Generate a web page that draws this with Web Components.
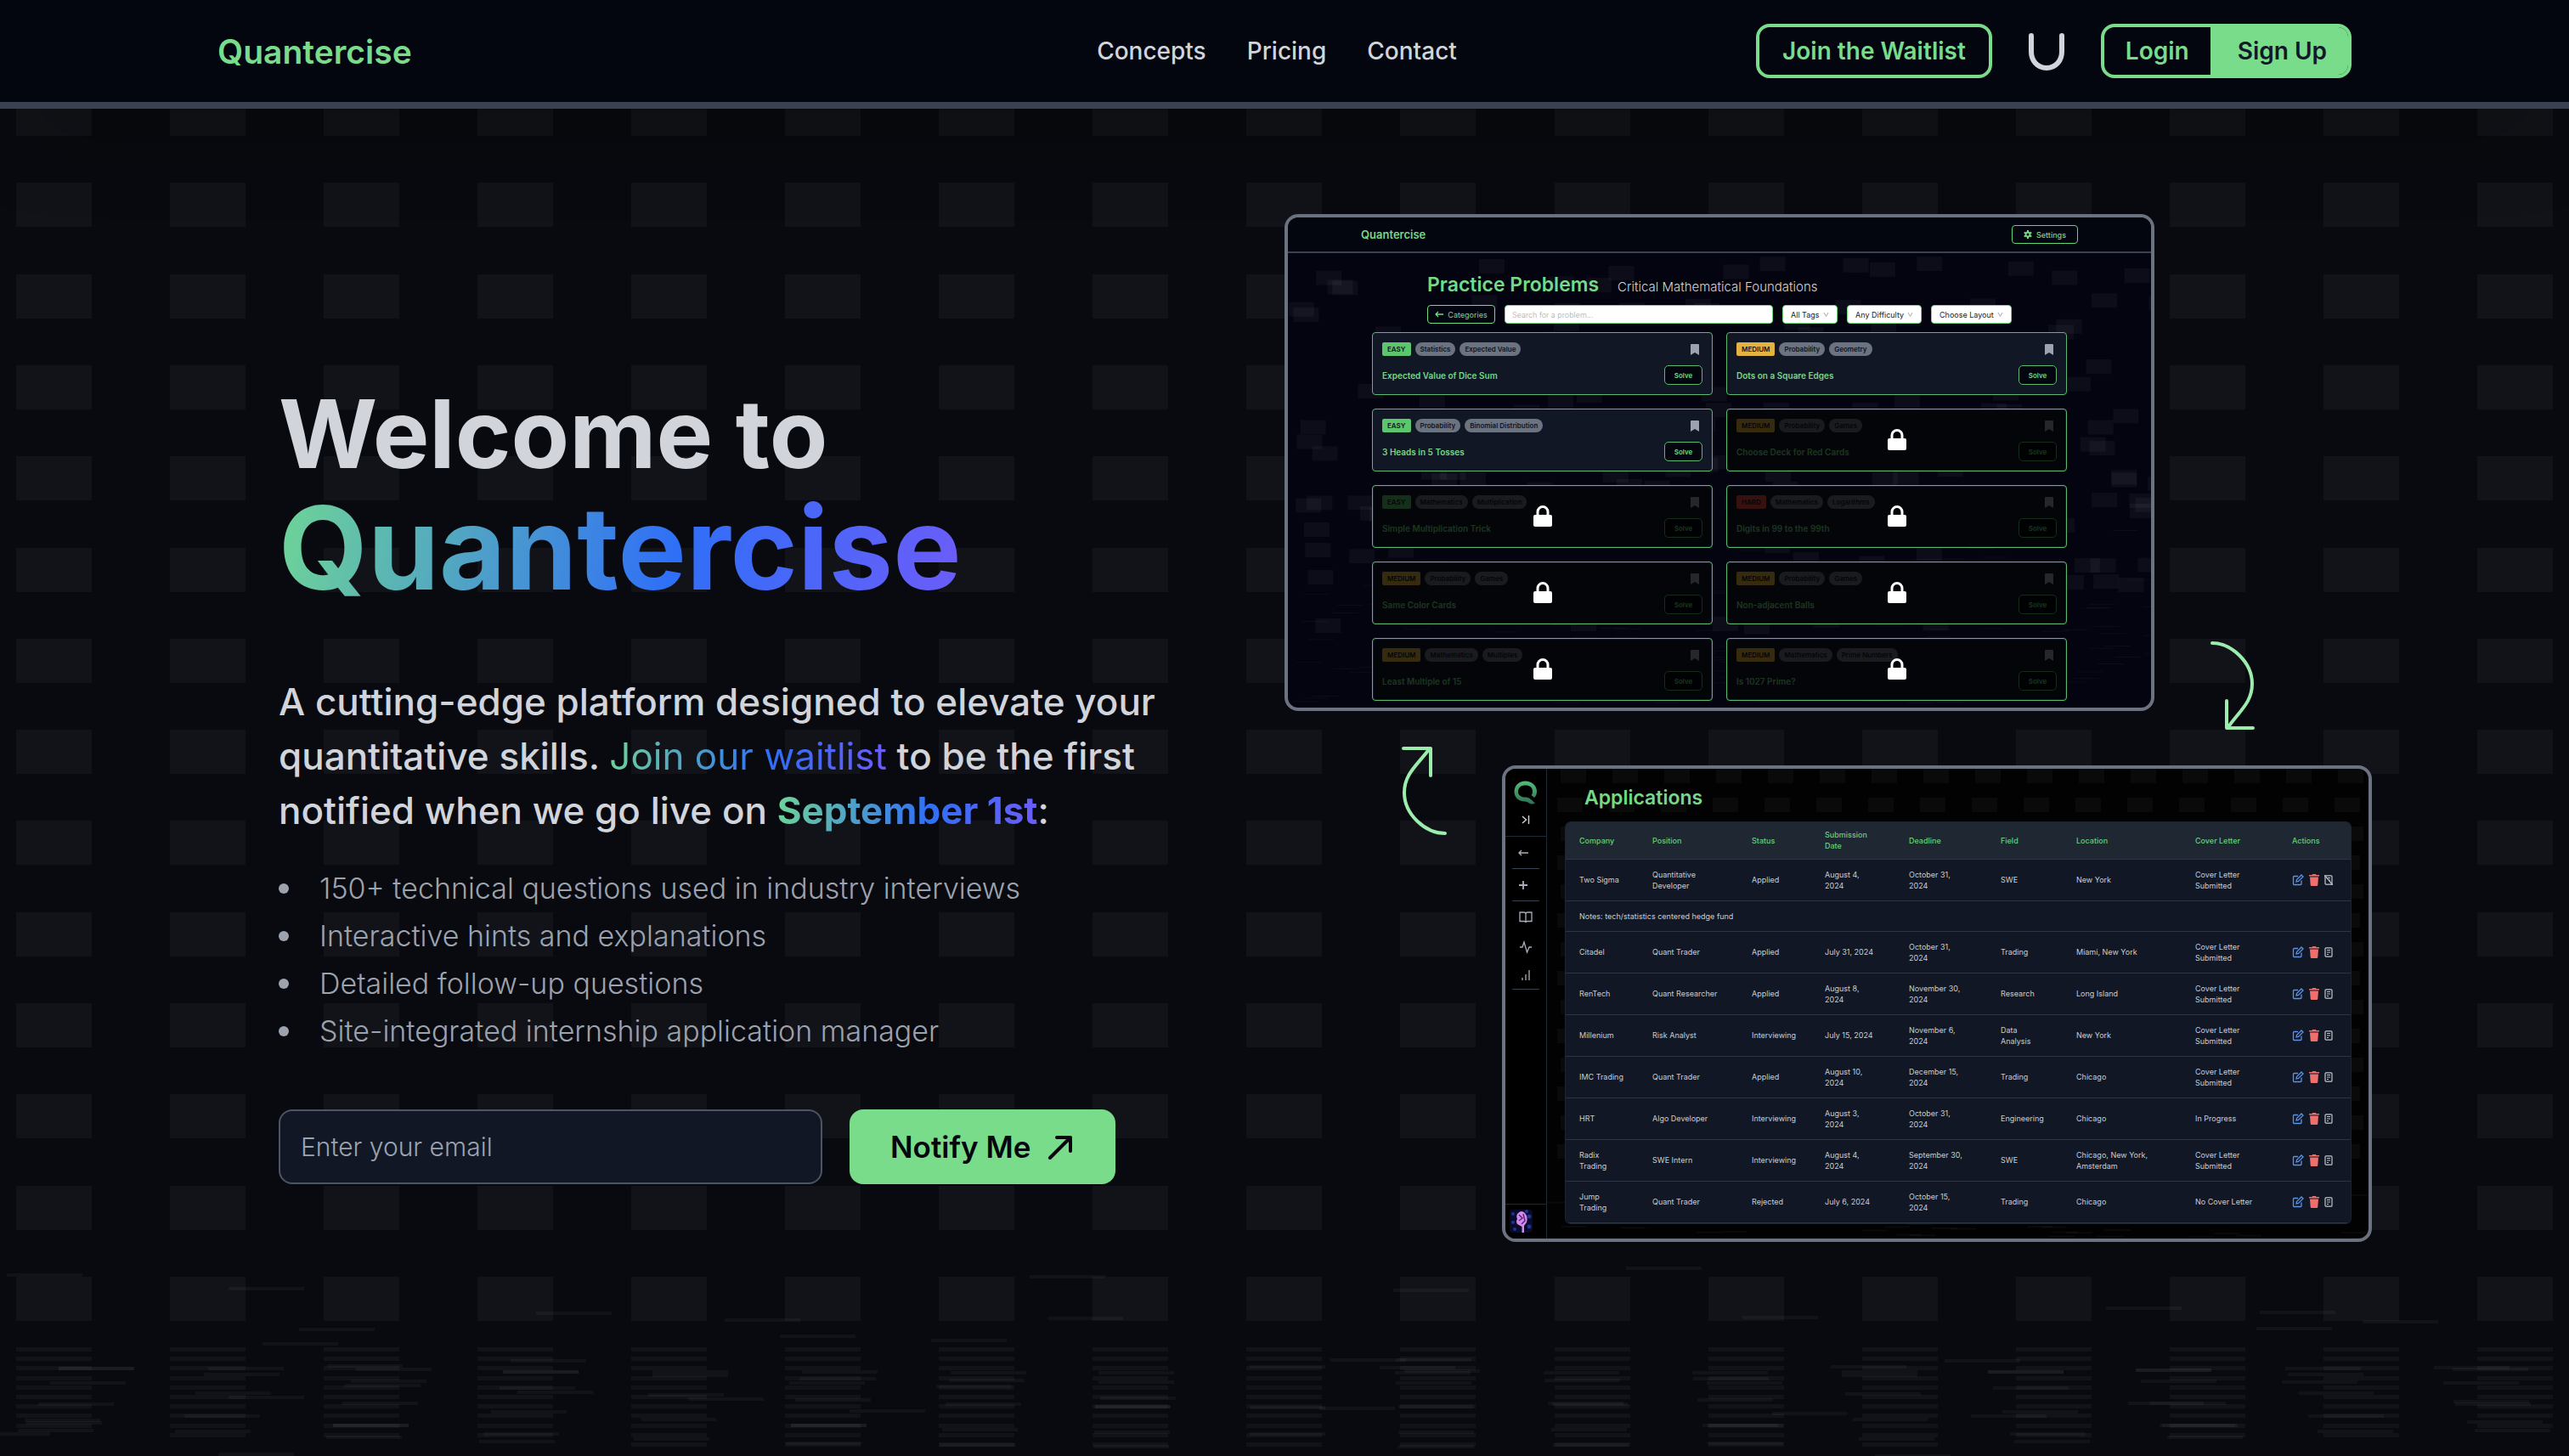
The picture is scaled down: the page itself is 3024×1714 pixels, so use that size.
<!DOCTYPE html>
<html lang="en">
<head>
<meta charset="utf-8">
<title>Quantercise</title>
<style>
  :root {
    --green: #79dc8a;
    --ink: #d1d5db;
    --grad: linear-gradient(100deg, #6fd596, #2f6ff7 58%, #6d5cfa);
  }
  body {
    margin: 0;
    background: #090a0f;
    color: var(--ink);
    font-family: Inter, "Noto Sans", sans-serif;
  }
</style>
</head>
<body>
<q-page></q-page>

<script>
const make = (name, html, setup) => {
  const tpl = document.createElement('template');
  tpl.innerHTML = `<style>*{box-sizing:border-box}a{color:inherit;text-decoration:none}button,input,select{font:inherit;color:inherit;margin:0}svg{display:block}</style>` + html;
  customElements.define(name, class extends HTMLElement {
    constructor() {
      super();
      this.attachShadow({ mode: 'open' }).append(tpl.content.cloneNode(true));
    }
    connectedCallback() {
      if (setup && !this.ready) { this.ready = true; setup(this, this.shadowRoot); }
    }
  });
};

const seeded = seed => () => (seed = (seed * 16807) % 2147483647) / 2147483647;

/* Falling tile backdrop of the whole page */
make('tile-field', `
<style>:host{display:block;position:absolute;inset:0;z-index:-1;overflow:hidden}svg{width:100%;height:100%}</style>
<svg viewBox="0 0 3024 1714" preserveAspectRatio="xMinYMin slice" fill="#fff" fill-opacity=".038"></svg>`,
(el, root) => {
  let s = '';
  const cols = Array.from({ length: 17 }, (_, i) => Math.round(19 + i * 181.05));
  const arc = [8, 9, 9, 9, 10, 10, 10, 10, 10, 10, 10, 10, 10, 9, 9, 9, 8];
  cols.forEach((x, c) => {
    for (let r = 0; r < 14; r++) s += `<rect x="${x}" y="${Math.round(108 + r * 107.3)}" width="89" height="52"/>`;
    for (let r = 0; r <= arc[c]; r++) s += `<rect x="${x}" y="${Math.round(1586 + r * 11.2)}" width="89" height="5"/>`;
  });
  const left = [[8,177],[281,225],[659,312],[891,337],[1267,183],[1289,329],[368,370],[323,419],[959,394],[1145,408],[402,498],[438,511],[628,480],[619,520],[619,520],[72,506],[72,506],[256,507],[251,528],[62,557],[432,552],[424,567],[614,576],[636,591],[240,595],[281,609],[47,633],[421,630],[604,661],[227,675],[30,691],[32,698],[22,726],[-31,739],[215,730],[410,709],[410,709],[595,737],[401,751],[589,765],[269,810],[803,520],[803,531],[986,520],[984,542],[971,557],[797,599],[846,615],[978,619],[1045,658],[788,688],[973,709],[973,709],[780,756],[967,772],[1169,521],[1167,550],[1152,570],[1163,633],[1159,723],[1156,778],[1351,521],[1351,556],[1353,611],[1347,643],[1347,643],[1346,732],[1345,784]];
  const right = [[426,153],[144,232],[567,326],[1007,293],[1194,310],[1318,341],[1190,367],[68,477],[147,477],[128,503],[146,521],[157,517],[147,557],[326,521],[327,550],[506,521],[507,542],[524,557],[674,501],[687,520],[687,531],[812,480],[864,519],[864,519],[871,576],[1043,512],[1043,514],[1050,552],[1224,507],[1228,528],[1220,554],[1240,595],[1405,505],[1427,509],[1416,557],[692,598],[512,618],[336,633],[331,631],[-30,500],[-30,644],[55,647],[150,643],[150,731],[603,665],[882,661],[844,675],[701,688],[519,709],[525,709],[335,723],[338,778],[525,772],[708,756],[891,738],[896,765],[1034,631],[1061,631],[1072,709],[1075,709],[1081,751],[1252,675],[1264,730],[1428,625],[1430,632],[1445,697],[1454,726],[728,816],[150,782],[-30,738]];
  const put = (list, ox, sx) => list.forEach(([x, y]) => {
    s += `<rect x="${Math.round(ox + x / sx)}" y="${Math.round(1440 + y / 3)}" width="89" height="4"/>`;
  });
  put(left, 0, 1.045);
  put(right, 1500, 1.029);
  root.querySelector('svg').innerHTML = s;
});

/* Tile backdrops inside the two product previews */
make('mini-tiles', `
<style>:host{display:block;position:absolute;inset:0;overflow:hidden}svg{width:100%;height:100%}</style>
<svg viewBox="0 0 1016 575" preserveAspectRatio="xMinYMin slice" fill="#fff"></svg>`,
(el, root) => {
  const rnd = seeded(+el.getAttribute('seed'));
  let s = '';
  if (el.getAttribute('kind') === 'grid') {
    for (let c = 0; c < 17; c++) {
      for (let r = 0; r < 14; r++) s += `<rect x="${65 + c * 61 - (r % 2) * 4}" y="${r * 34}" width="30" height="17"/>`;
    }
    for (let i = 0; i < 70; i++) s += `<rect x="${40 + rnd() * 960}" y="${500 + rnd() * 52}" width="30" height="2"/>`;
  } else {
    for (let i = 0; i < 170; i++) s += `<rect x="${rnd() * 1010}" y="${44 + rnd() * 430}" width="30" height="17"/>`;
    for (let i = 0; i < 150; i++) s += `<rect x="${rnd() * 1010}" y="${340 + Math.sqrt(rnd()) * 230}" width="30" height="1"/>`;
  }
  const svg = root.querySelector('svg');
  svg.setAttribute('fill-opacity', el.getAttribute('alpha'));
  svg.innerHTML = s;
});

make('site-header', `
<style>
  :host{display:block;position:relative;z-index:1}
  header{display:grid;grid-template-columns:1fr auto 1fr;align-items:center;height:128px;padding:0 256px;
    background:#03050f;border-bottom:8px solid #3a4150;box-shadow:0 50px 100px -24px rgba(0,0,0,.3)}
  .logo{font-size:39px;font-weight:600;color:var(--green);justify-self:start}
  nav{display:flex;gap:48px;margin-right:18px;font-size:28px;font-weight:500}
  .right{display:flex;align-items:center;justify-self:end;font-size:28px;font-weight:600;color:var(--green)}
  .box{display:flex;align-items:center;height:64px;border:4px solid var(--green);border-radius:16px;overflow:hidden}
  .wait{padding:0 27px}
  svg{margin:0 43px}
  .login{padding:0 25px}
  .sign{background:var(--green);color:#111827;padding:0 25px 0 32px;line-height:64px}
</style>
<header>
  <a class="logo" href="#">Quantercise</a>
  <nav><a href="#">Concepts</a><a href="#">Pricing</a><a href="#">Contact</a></nav>
  <div class="right">
    <a class="box wait" href="#">Join the Waitlist</a>
    <svg width="42" height="46" viewBox="0 0 42 46" fill="none" stroke="#d1d5db" stroke-width="6" stroke-linecap="round"><path d="M3 5V24C3 34 10 43 21 43S39 34 39 24V5"/></svg>
    <div class="box"><a class="login" href="#">Login</a><a class="sign" href="#">Sign Up</a></div>
  </div>
</header>`);

make('hero-copy', `
<style>
  :host{display:block}
  h1{margin:0 0 74px;font-size:112px;line-height:120px;font-weight:700}
  h1 span{display:block;font-size:135px;line-height:150px;width:fit-content}
  .g{background:var(--grad);-webkit-background-clip:text;background-clip:text;color:transparent}
  p{margin:0 0 32px;font-size:44px;line-height:64px;font-weight:500;max-width:1060px}
  p a{font-weight:400}
  p b{font-weight:700}
  ul{margin:0 0 64px;padding:0;list-style:none;font-size:34px;line-height:56px;font-weight:300;color:#9ca3af}
  li{display:flex;align-items:center;gap:36px}
  li::before{content:"";width:12px;height:12px;border-radius:50%;background:#9ca3af}
  form{display:flex;gap:32px}
  input{width:640px;height:88px;padding:0 24px;border:2px solid #4b5563;border-radius:16px;background:#111725;font-size:30px;font-weight:300;outline:0}
  input::placeholder{color:#9ca3af;opacity:1}
  button{display:flex;align-items:center;gap:20px;height:88px;padding:0 50px 0 48px;border:0;border-radius:16px;background:var(--green);
    color:#05070d;font-size:35px;font-weight:600}
</style>
<h1>Welcome to <span class="g">Quantercise</span></h1>
<p>A cutting-edge platform designed to elevate your<br>quantitative skills. <a class="g" href="#">Join our waitlist</a> to be the first<br>notified when we go live on <b class="g">September 1st</b>:</p>
<ul>
  <li>150+ technical questions used in industry interviews</li>
  <li>Interactive hints and explanations</li>
  <li>Detailed follow-up questions</li>
  <li>Site-integrated internship application manager</li>
</ul>
<form>
  <input type="email" placeholder="Enter your email" aria-label="Email">
  <button type="button">Notify Me <svg width="30" height="30" viewBox="0 0 30 30" fill="none" stroke="#05070d" stroke-width="4" stroke-linecap="round" stroke-linejoin="round"><path d="M3 28L27 4M11 4H27V20"/></svg></button>
</form>`);

make('app-window', `
<style>
  :host{display:block;width:1024px}
  div{position:relative;border:4px solid #6b7280;border-radius:16px;overflow:hidden;background:var(--bg,#03040f);height:100%;z-index:0}
</style>
<div><slot></slot></div>`);

make('problem-card', `
<style>
  :host{display:block;position:relative}
  article{height:74px;border:1px solid #5cb870;border-radius:4px;background:#111725;padding:11px;display:flex;flex-direction:column;justify-content:space-between;position:relative}
  .row{display:flex;align-items:center;justify-content:space-between}
  .tags{display:flex;gap:5px;font-size:8px;line-height:16px;font-weight:600;color:#10131c}
  .tags span{padding:0 6px;border-radius:8px;background:#6b7280}
  .tags .lv{border-radius:2px;background:#5cc66c}
  .tags .MEDIUM{background:#e3b341}
  .tags .HARD{background:#e0483e}
  h3{margin:0;font-size:10px;font-weight:600;color:#76d888}
  button{width:45px;height:23px;padding:0;border:1px solid #5cb870;border-radius:5px;background:#03050f;color:#76d888;font-size:8px;font-weight:600}
  .mark{margin-right:4px}
  .lock{display:none}
  :host([locked]) .lock{position:absolute;inset:1px;border-radius:3px;background:rgba(0,0,0,.76);display:flex;align-items:center;justify-content:center}
</style>
<article>
  <div class="row"><div class="tags"></div><svg class="mark" width="10" height="13" viewBox="0 0 10 13" fill="#9ca3af"><path d="M0 1Q0 0 1 0H9Q10 0 10 1V13L5 10L0 13Z"/></svg></div>
  <div class="row"><h3><slot></slot></h3><button type="button">Solve</button></div>
  <div class="lock"><svg width="22" height="26" viewBox="0 0 22 26"><rect y="11" width="22" height="14" rx="2" fill="#fff"/><path d="M5 12V7.500A6 6 0 0 1 17 7.500V12" fill="none" stroke="#fff" stroke-width="3"/></svg></div>
</article>`,
(el, root) => {
  const [lv, ...tags] = el.getAttribute('tags').split(',');
  root.querySelector('.tags').innerHTML = `<span class="lv ${lv}">${lv}</span>` + tags.map(t => `<span>${t}</span>`).join('');
});

make('practice-screen', `
<style>
  :host{display:block}
  header{position:relative;display:flex;align-items:center;justify-content:space-between;height:42px;padding:0 86px;background:#03050f;border-bottom:2px solid #3a4150}
  .logo{font-size:13px;font-weight:600;color:#76d888}
  .set{display:flex;align-items:center;gap:5px;width:78px;height:22px;justify-content:center;border:1px solid #5fd673;border-radius:4px;background:#03050f;color:#76d888;font-size:9px;font-weight:500;padding:0}
  .body{position:relative;padding:23px 99px 8px 99px}
  .title{display:flex;align-items:baseline;gap:22px;padding-left:65px;line-height:28px}
  h2{margin:0;font-size:23px;line-height:28px;font-weight:600;color:#76d888}
  .title span{font-size:15px;font-weight:300}
  .bar{display:flex;gap:11px;padding:7px 65px 10px;font-size:9px}
  .bar>*{height:22px;border:1px solid #6fdc80;border-radius:4px;background:#fff;color:#222;outline:0}
  .bar button{width:80px;padding:0;background:#03050f;color:#76d888;display:flex;align-items:center;justify-content:center;gap:5px}
  input{flex:1;min-width:0;padding:0 8px;font-weight:300}
  input::placeholder{color:#aaa;opacity:1}
  .pick{position:relative;display:flex}
  select{appearance:none;border:0;background:none;padding:0 9px;width:100%;outline:0}
  .pick svg{position:absolute;right:9px;top:7px}
  .w1{width:65px}.w2{width:88px}.w3{width:95px}
  .grid{display:grid;grid-template-columns:1fr 1fr;gap:16px}
</style>
<mini-tiles seed="77" kind="random" alpha=".04"></mini-tiles>
<header>
  <a class="logo" href="#">Quantercise</a>
  <button class="set" type="button"><svg width="10" height="10" viewBox="0 0 10 10"><circle cx="5" cy="5" r="2.500" fill="none" stroke="#76d888" stroke-width="2"/><path d="M5 0V2M5 8V10M.7 2.500L2.400 3.500M7.600 6.500L9.300 7.500M.7 7.500L2.400 6.500M7.600 3.500L9.300 2.500" stroke="#76d888" stroke-width="2"/></svg>Settings</button>
</header>
<div class="body">
  <div class="title"><h2>Practice Problems</h2><span>Critical Mathematical Foundations</span></div>
  <div class="bar">
    <button type="button"><svg width="10" height="8" viewBox="0 0 10 8" fill="none" stroke="#76d888" stroke-width="1.300"><path d="M10 4H1M4 1L1 4L4 7"/></svg>Categories</button>
    <input type="search" placeholder="Search for a problem..." aria-label="Search for a problem">
    <div class="pick w1"><select aria-label="Tags"><option>All Tags</option></select><svg width="7" height="7" viewBox="0 0 7 7" fill="none" stroke="#aaa"><path d="M1 1L3.500 5.500L6 1"/></svg></div>
    <div class="pick w2"><select aria-label="Difficulty"><option>Any Difficulty</option></select><svg width="7" height="7" viewBox="0 0 7 7" fill="none" stroke="#aaa"><path d="M1 1L3.500 5.500L6 1"/></svg></div>
    <div class="pick w3"><select aria-label="Layout"><option>Choose Layout</option></select><svg width="7" height="7" viewBox="0 0 7 7" fill="none" stroke="#aaa"><path d="M1 1L3.500 5.500L6 1"/></svg></div>
  </div>
  <div class="grid">
    <problem-card tags="EASY,Statistics,Expected Value">Expected Value of Dice Sum</problem-card>
    <problem-card tags="MEDIUM,Probability,Geometry">Dots on a Square Edges</problem-card>
    <problem-card tags="EASY,Probability,Binomial Distribution">3 Heads in 5 Tosses</problem-card>
    <problem-card locked tags="MEDIUM,Probability,Games">Choose Deck for Red Cards</problem-card>
    <problem-card locked tags="EASY,Mathematics,Multiplication">Simple Multiplication Trick</problem-card>
    <problem-card locked tags="HARD,Mathematics,Logarithms">Digits in 99 to the 99th</problem-card>
    <problem-card locked tags="MEDIUM,Probability,Games">Same Color Cards</problem-card>
    <problem-card locked tags="MEDIUM,Probability,Games">Non-adjacent Balls</problem-card>
    <problem-card locked tags="MEDIUM,Mathematics,Multiples">Least Multiple of 15</problem-card>
    <problem-card locked tags="MEDIUM,Mathematics,Prime Numbers">Is 1027 Prime?</problem-card>
  </div>
</div>`);

make('side-rail', `
<style>
  :host{display:flex;flex-direction:column;width:49px;border-right:1px solid #1f2937;background:#000;position:relative}
  .top{height:80px;border-bottom:1px solid #1f2937;display:flex;flex-direction:column;align-items:center;gap:12px;padding-top:14px}
  nav{display:flex;flex-direction:column;padding:0 8px}
  a{display:flex;align-items:center;justify-content:center;height:32px}
  a.sep{height:38px;border-bottom:1px solid #374151;padding-right:6px}
  nav .last{border-bottom:1px solid #374151;height:34px}
  nav .book{height:38px}
  .me{margin-top:auto;height:41px;border-top:1px solid #1f2937;padding:6px 5px}
  nav svg{stroke:#a9afb9;fill:none;stroke-width:1.300}
</style>
<div class="top">
  <svg width="28" height="28" viewBox="0 0 28 28" fill="none"><defs><linearGradient id="q" x1="0" y1="0" x2="0" y2="1"><stop stop-color="#56b978"/><stop offset="1" stop-color="#2d7353"/></linearGradient></defs><path d="M13.500 .5C21 .5 27 5.500 27 12.500C27 15.500 26 18 24 20L20.500 17C21.500 16 22 14.500 22 12.500C22 8 18.500 5.500 13.500 5.500C8.500 5.500 5 8 5 13C5 17 8.500 19.500 13 19.500C18 19.500 20 22 25 26.500L22 27.500C18 28 17 24.500 13 24.500C6 24.500 .5 20 .5 13C.5 5.500 6 .5 13.500 .5Z" fill="url(#q)"/></svg>
  <svg width="10" height="12" viewBox="0 0 10 12" fill="none" stroke="#d1d5db" stroke-width="1.400"><path d="M1 2L5.500 6L1 10M8.500 1V11"/></svg>
</div>
<nav>
  <a class="sep" href="#" aria-label="Back"><svg width="12" height="8" viewBox="0 0 12 8"><path d="M12 4H1.500M4 1L1 4L4 7"/></svg></a>
  <a class="sep" href="#" aria-label="Add"><svg width="10" height="10" viewBox="0 0 10 10" style="stroke-width:1.800"><path d="M5 0V10M0 5H10"/></svg></a>
  <a class="book" href="#" aria-label="Problems"><svg width="16" height="14" viewBox="0 0 16 14"><path d="M1 1H6Q8 1 8 3V13Q8 11.500 6 11.500H1ZM15 1H10Q8 1 8 3V13Q8 11.500 10 11.500H15Z"/></svg></a>
  <a href="#" aria-label="Activity"><svg width="16" height="16" viewBox="0 0 16 16"><path d="M1 8H4L6 2L9.500 14L12 8H15"/></svg></a>
  <a class="last" href="#" aria-label="Stats"><svg width="12" height="14" viewBox="0 0 12 14"><path d="M2 13V10M6 13V6M10 13V1"/></svg></a>
</nav>
<div class="me"><svg width="27" height="27" viewBox="0 0 27 27"><defs><clipPath id="r"><rect width="27" height="27" rx="4"/></clipPath></defs><g clip-path="url(#r)"><rect width="27" height="27" fill="#090a2c"/><g fill="#2543b5" opacity=".75"><circle cx="4" cy="5" r="2"/><circle cx="23" cy="8" r="2.500"/><circle cx="4" cy="15" r="2"/><circle cx="23" cy="20" r="2.500"/><circle cx="6" cy="23" r="2"/><circle cx="20" cy="2" r="2"/></g><path d="M10 4Q14 0 18 4Q22 9 20 15L17 19V27H14.500V20L9 17Q7 14 9 11Q7 7 10 4Z" fill="#d58be8"/><path d="M11 6L15 10L11 13M16 5L18 13L14 17" stroke="#5a2488" stroke-width="1.500" fill="none"/></g></svg></div>`);

make('row-actions', `
<style>
  :host{display:flex;align-items:center;gap:6px}
  button{padding:0;border:0;background:none}
</style>
<button type="button" aria-label="Edit"><svg width="14" height="14" viewBox="0 0 14 14" fill="none" stroke="#5b93e6" stroke-width="1.300"><path d="M7 2.500H2.500Q1.500 2.500 1.500 3.500V11.500Q1.500 12.500 2.500 12.500H10Q11 12.500 11 11.500V7.500M5 9L5.500 6.500L11 1L13 3L7.500 8.500Z"/></svg></button>
<button type="button" aria-label="Delete"><svg width="12" height="14" viewBox="0 0 12 14" fill="#ee6f6b"><path d="M4 0H8L8.500 1H12V2.500H0V1H3.500ZM1 3.500H11L10.300 12.800Q10.200 14 9 14H3Q1.800 14 1.700 12.800Z"/></svg></button>
<button type="button" aria-label="Notes"><svg width="10" height="12" viewBox="0 0 10 12" fill="none" stroke="#c3c7ce" stroke-width="1.200"><rect x="1" y=".8" width="8" height="10.400" rx="1"/><path class="n" d="M3 3.500H7M3 6H7M3 8.500H5"/></svg></button>`,
(el, root) => {
  if (el.hasAttribute('open')) root.querySelector('.n').setAttribute('d', 'M4 3.500H7M5 6H7M0 0L10 12');
});

make('applications-screen', `
<style>
  :host{display:flex;position:relative;height:553px}
  main{position:relative;flex:1;padding:23px 21px 0 22px}
  h2{margin:0 0 18px 22px;font-size:23px;line-height:22px;font-weight:600;color:#76d888}
  .wrap{border-radius:6px;overflow:hidden;background:#111725;box-shadow:0 0 0 1px #1c2432}
  table{width:100%;border-collapse:collapse;table-layout:fixed;font-size:9px;line-height:13px;color:#c9cdd3;white-space:nowrap}
  th{height:43px;background:#1f2733;color:#68cf7b;font-weight:500;text-align:left}
  th,td{padding:0 0 0 16px;border-bottom:1px solid #2d3544}
  td{height:49px}
  tr.note td{height:36px}
</style>
<mini-tiles seed="9" kind="grid" alpha=".035"></mini-tiles>
<side-rail></side-rail>
<main>
  <h2>Applications</h2>
  <div class="wrap"><table>
    <colgroup><col style="width:86px"><col style="width:117px"><col style="width:86px"><col style="width:99px"><col style="width:108px"><col style="width:89px"><col style="width:140px"><col style="width:114px"><col></colgroup>
    <thead><tr><th>Company</th><th>Position</th><th>Status</th><th>Submission<br>Date</th><th>Deadline</th><th>Field</th><th>Location</th><th>Cover Letter</th><th>Actions</th></tr></thead>
    <tbody></tbody>
  </table></div>
</main>`,
(el, root) => {
  const S = 'Cover Letter<br>Submitted';
  const rows = [
    ['Two Sigma', 'Quantitative<br>Developer', 'Applied', 'August 4,<br>2024', 'October 31,<br>2024', 'SWE', 'New York', S],
    ['Citadel', 'Quant Trader', 'Applied', 'July 31, 2024', 'October 31,<br>2024', 'Trading', 'Miami, New York', S],
    ['RenTech', 'Quant Researcher', 'Applied', 'August 8,<br>2024', 'November 30,<br>2024', 'Research', 'Long Island', S],
    ['Millenium', 'Risk Analyst', 'Interviewing', 'July 15, 2024', 'November 6,<br>2024', 'Data<br>Analysis', 'New York', S],
    ['IMC Trading', 'Quant Trader', 'Applied', 'August 10,<br>2024', 'December 15,<br>2024', 'Trading', 'Chicago', S],
    ['HRT', 'Algo Developer', 'Interviewing', 'August 3,<br>2024', 'October 31,<br>2024', 'Engineering', 'Chicago', 'In Progress'],
    ['Radix<br>Trading', 'SWE Intern', 'Interviewing', 'August 4,<br>2024', 'September 30,<br>2024', 'SWE', 'Chicago, New York,<br>Amsterdam', S],
    ['Jump<br>Trading', 'Quant Trader', 'Rejected', 'July 6, 2024', 'October 15,<br>2024', 'Trading', 'Chicago', 'No Cover Letter']
  ];
  root.querySelector('tbody').innerHTML = rows.map((r, i) =>
    `<tr>${r.map(c => `<td>${c}</td>`).join('')}<td><row-actions${i ? '' : ' open'}></row-actions></td></tr>` +
    (i ? '' : '<tr class="note"><td colspan="9">Notes: tech/statistics centered hedge fund</td></tr>')).join('');
});

make('screen-showcase', `
<style>
  :host{display:flex;flex-direction:column;gap:64px}
  .r{display:flex;gap:64px}
  .two{padding-left:136px}
  .down{align-self:flex-end;margin-bottom:-24px}
  .up{align-self:flex-start;margin-top:-24px}
  .arr{flex:none;fill:none;stroke:#9cecae;stroke-width:4;stroke-linecap:round;stroke-linejoin:round}
  .apps{--bg:#020203}
</style>
<div class="r">
  <app-window><practice-screen></practice-screen></app-window>
  <svg class="arr down" width="56" height="108" viewBox="0 0 56 108"><path d="M4 4C26 4 51 26 51 52C51 74 36 84 22 104M21 72V104M22 104H52"/></svg>
</div>
<div class="r two">
  <svg class="arr up" width="56" height="108" viewBox="0 0 56 108"><path d="M53 104C30 104 5 82 5 56C5 34 20 24 35 4M36 36V4M35 4H4"/></svg>
  <app-window class="apps"><applications-screen></applications-screen></app-window>
</div>`);

make('q-page', `
<style>
  :host{display:flex;flex-direction:column;position:relative;min-height:100vh;z-index:0}
  main{flex:1;display:flex;align-items:center;justify-content:space-between;padding:0 232px 128px 328px}
  hero-copy{flex:1;padding-top:130px}
</style>
<tile-field></tile-field>
<site-header></site-header>
<main><hero-copy></hero-copy><screen-showcase></screen-showcase></main>`);
</script>
</body>
</html>
